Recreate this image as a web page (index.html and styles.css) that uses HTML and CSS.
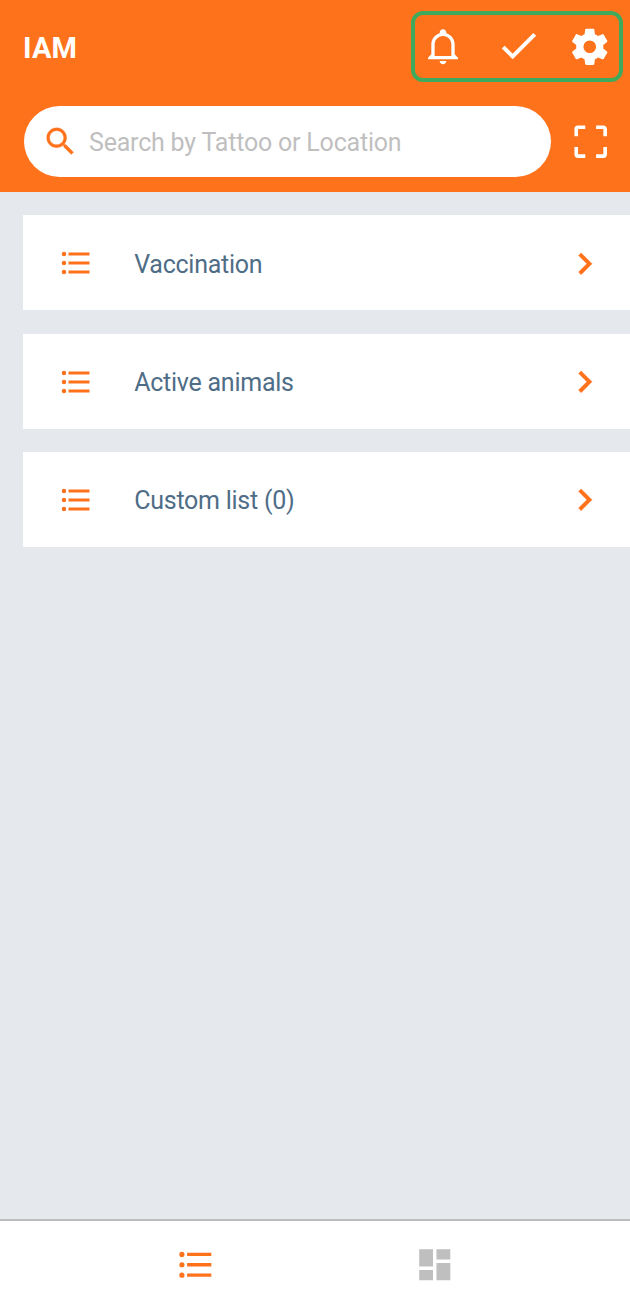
FILE: index.html
```html
<!DOCTYPE html>
<html lang="en">
<head>
<meta charset="utf-8">
<title>IAM</title>
<link rel="stylesheet" href="styles.css">
</head>
<body>
<svg class="sprite" aria-hidden="true">
  <symbol id="list" viewBox="0 0 24 24"><path d="M7,5H21V7H7V5M7,13V11H21V13H7M4,4.5A1.5,1.5 0 0,1 5.5,6A1.5,1.5 0 0,1 4,7.5A1.5,1.5 0 0,1 2.5,6A1.5,1.5 0 0,1 4,4.5M4,10.5A1.5,1.5 0 0,1 5.5,12A1.5,1.5 0 0,1 4,13.5A1.5,1.5 0 0,1 2.5,12A1.5,1.5 0 0,1 4,10.5M7,19V17H21V19H7M4,16.5A1.5,1.5 0 0,1 5.5,18A1.5,1.5 0 0,1 4,19.5A1.5,1.5 0 0,1 2.5,18A1.5,1.5 0 0,1 4,16.5Z"/></symbol>
  <symbol id="chevron" viewBox="0 0 24 24"><path d="M8.59,16.58L13.17,12L8.59,7.41L10,6L16,12L10,18L8.59,16.58Z"/></symbol>
</svg>
<div class="app">
  <header class="header">
    <div class="toolbar">
      <h1 class="title">IAM</h1>
      <div class="actions">
        <svg class="bell" viewBox="0 0 24 24"><path d="M10 21H14C14 22.1 13.1 23 12 23S10 22.1 10 21M21 19V20H3V19L5 17V11C5 7.9 7 5.2 10 4.3V4C10 2.9 10.9 2 12 2S14 2.9 14 4V4.3C17 5.2 19 7.9 19 11V17L21 19M17 11C17 8.2 14.8 6 12 6S7 8.2 7 11V18H17V11Z"/></svg>
        <svg class="check" viewBox="0 0 24 24"><path d="M21,7L9,19L3.5,13.5L4.91,12.09L9,16.17L19.59,5.59L21,7Z"/></svg>
        <svg class="cog" viewBox="0 0 24 24"><path d="M12,15.5A3.5,3.5 0 0,1 8.5,12A3.5,3.5 0 0,1 12,8.5A3.5,3.5 0 0,1 15.5,12A3.5,3.5 0 0,1 12,15.5M19.43,12.97C19.47,12.65 19.5,12.33 19.5,12C19.5,11.67 19.47,11.34 19.43,11L21.54,9.37C21.73,9.22 21.78,8.95 21.66,8.73L19.66,5.27C19.54,5.05 19.27,4.96 19.05,5.05L16.56,6.05C16.04,5.66 15.5,5.32 14.87,5.07L14.5,2.42C14.46,2.18 14.25,2 14,2H10C9.75,2 9.54,2.18 9.5,2.42L9.13,5.07C8.5,5.32 7.96,5.66 7.44,6.05L4.95,5.05C4.73,4.96 4.46,5.05 4.34,5.27L2.34,8.73C2.21,8.95 2.27,9.22 2.46,9.37L4.57,11C4.53,11.34 4.5,11.67 4.5,12C4.5,12.33 4.53,12.65 4.57,12.97L2.46,14.63C2.27,14.78 2.21,15.05 2.34,15.27L4.34,18.73C4.46,18.95 4.73,19.03 4.95,18.95L7.44,17.94C7.96,18.34 8.5,18.68 9.13,18.93L9.5,21.58C9.54,21.82 9.75,22 10,22H14C14.25,22 14.46,21.82 14.5,21.58L14.87,18.93C15.5,18.67 16.04,18.34 16.56,17.94L19.05,18.95C19.27,19.03 19.54,18.95 19.66,18.73L21.66,15.27C21.78,15.05 21.73,14.78 21.54,14.63L19.43,12.97Z"/></svg>
      </div>
    </div>
    <div class="search-row">
      <div class="search">
        <svg class="magnifier" viewBox="0 0 24 24"><path d="M15.5 14h-.79l-.28-.27C15.41 12.59 16 11.11 16 9.5 16 5.91 13.09 3 9.5 3S3 5.91 3 9.5 5.91 16 9.5 16c1.61 0 3.09-.59 4.23-1.57l.27.28v.79l5 4.99L20.49 19l-4.99-5zm-6 0C7.01 14 5 11.99 5 9.5S7.01 5 9.5 5 14 7.01 14 9.5 11.99 14 9.5 14z"/></svg>
        <span class="placeholder">Search by Tattoo or Location</span>
      </div>
      <svg class="scan" viewBox="0 0 24 24"><path d="M19,3H15V5H19V9H21V5C21,3.89 20.1,3 19,3M19,19H15V21H19A2,2 0 0,0 21,19V15H19M5,15H3V19A2,2 0 0,0 5,21H9V19H5M3,5V9H5V5H9V3H5A2,2 0 0,0 3,5Z"/></svg>
    </div>
  </header>
  <main class="lists">
    <div class="card"><svg class="card-icon"><use href="#list"/></svg><span class="label">Vaccination</span><svg class="chevron"><use href="#chevron"/></svg></div>
    <div class="card"><svg class="card-icon"><use href="#list"/></svg><span class="label">Active animals</span><svg class="chevron"><use href="#chevron"/></svg></div>
    <div class="card"><svg class="card-icon"><use href="#list"/></svg><span class="label">Custom list (0)</span><svg class="chevron"><use href="#chevron"/></svg></div>
  </main>
  <nav class="tabs">
    <svg class="tab tab-active"><use href="#list"/></svg>
    <svg class="tab" viewBox="0 0 24 24"><path d="M13,3V9H21V3M13,21H21V11H13M3,21H11V15H3M3,13H11V3H3V13Z"/></svg>
  </nav>
</div>
</body>
</html>
```

FILE: styles.css
```css
* { box-sizing: border-box; }
body { margin: 0; font-family: Roboto, "Liberation Sans", sans-serif; }
svg { display: block; flex: none; fill: currentColor; }
.sprite { display: none; }
.app { display: flex; flex-direction: column; height: 1303px; background: #e5e8ed; }
.header { height: 192px; background: #ff721c; color: #fff; }
.toolbar { display: flex; justify-content: space-between; align-items: flex-start; padding: 11px 7px 0 23px; }
.title { margin: 18px 0 0; font-size: 29px; line-height: 38px; font-weight: 700; letter-spacing: 0.2px; }
.actions { display: flex; align-items: center; width: 212px; height: 71px; padding-left: 8.2px; border: 4px solid #3fa95c; border-radius: 12px; }
.bell { width: 40px; height: 40px; margin-top: -1px; }
.check { width: 47px; height: 47px; margin: -1.5px 0 0 31.4px; }
.cog { width: 43.5px; height: 43.5px; margin: -0.5px 0 0 26px; }
.search-row { display: flex; align-items: center; padding: 23.5px 0 0 24px; }
.search { display: flex; align-items: center; width: 526.5px; height: 71.5px; padding-left: 17.5px; border-radius: 36px; background: #fff; color: #ff721c; }
.magnifier { width: 37px; height: 37px; stroke: currentColor; stroke-width: 0.15; }
.placeholder { margin: 3px 0 0 10.5px; color: #bfbfbf; font-size: 25px; line-height: 30px; letter-spacing: -0.2px; white-space: nowrap; }
.scan { width: 43.4px; height: 43.4px; margin-left: 18.5px; }
.lists { display: flex; flex: 1; flex-direction: column; gap: 23.3px; padding: 23.4px 0 0 23.3px; }
.card { display: flex; align-items: center; height: 95px; padding: 0 23.7px 0 34.6px; background: #fff; color: #ff721c; }
.card-icon { width: 36px; height: 36px; margin-top: 0.8px; }
.label { flex: 1; margin: 4px 0 0 40.3px; color: #4f6d87; font-size: 25px; line-height: 30px; letter-spacing: -0.25px; }
.chevron { width: 43.5px; height: 43.5px; margin-top: 0.8px; stroke: currentColor; stroke-width: 0.25; stroke-linejoin: round; }
.tabs { display: flex; gap: 198px; height: 84px; padding: 22.8px 0 0 174.6px; border-top: 2px solid #bdbdbd; background: #fff; color: #bfbfbf; }
.tab { width: 41.5px; height: 41.5px; }
.tab-active { color: #ff721c; }
```
